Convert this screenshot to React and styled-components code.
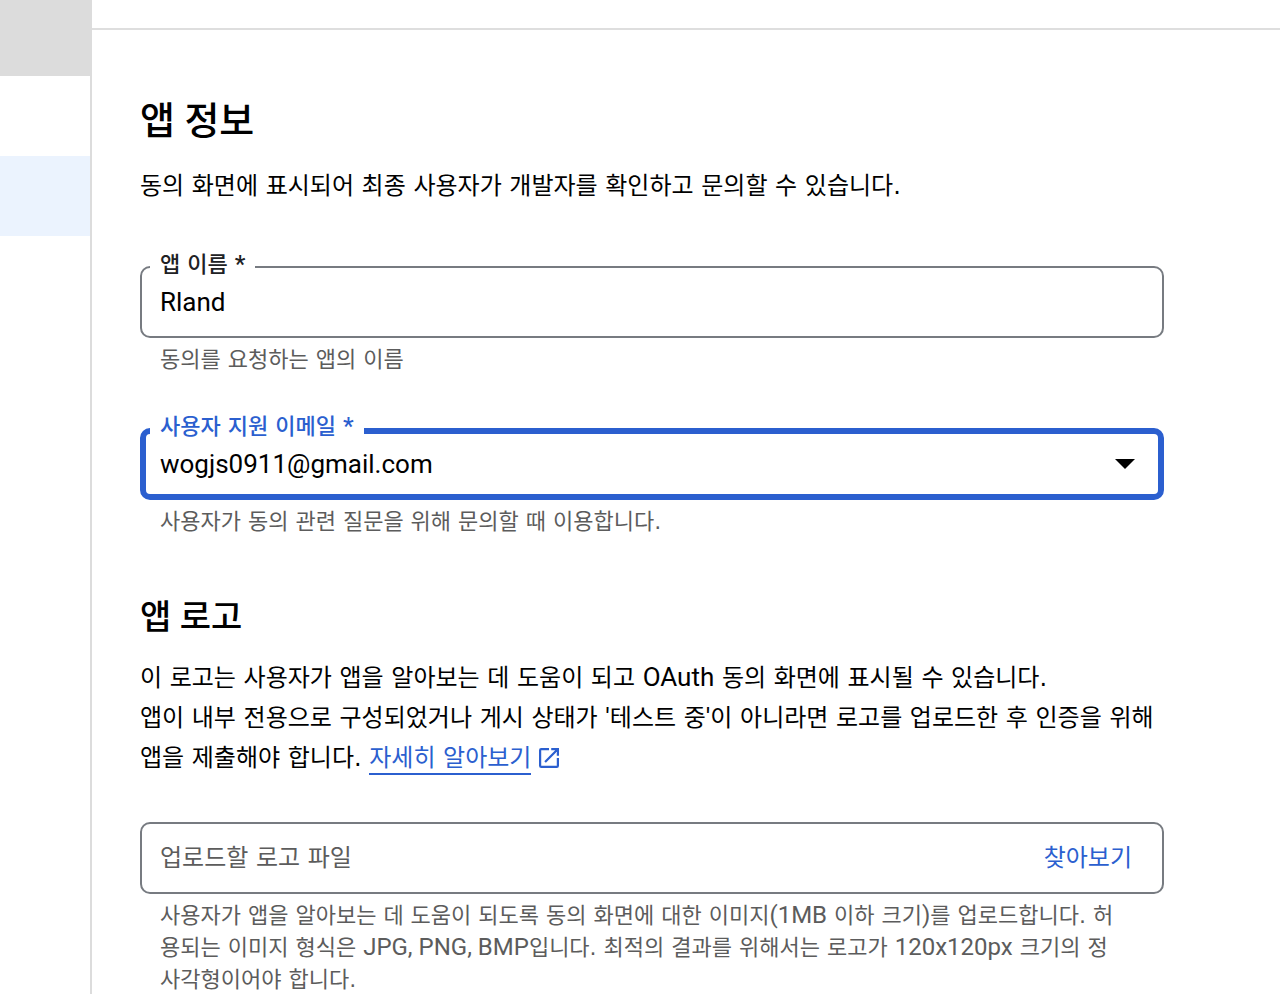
import React from "react";
import styled, { createGlobalStyle } from "styled-components";

const GlobalStyle = createGlobalStyle`
  * { box-sizing: border-box; }
  html, body, #root { margin: 0; min-height: 100vh; }
  #root { height: 100vh; overflow: hidden; }
  body {
    background: #fff;
    color: #000;
    font-family: "DejaVu Sans", "Noto Sans CJK KR", sans-serif;
    font-size: 24px;
    line-height: 40px;
  }
`;

const Shell = styled.div`
  display: flex;
  min-height: 100vh;
`;

const Sidebar = styled.nav`
  flex: 0 0 92px;
  border-right: 2px solid #dcdcdc;
`;

const ProjectBlock = styled.div`
  height: 76px;
  background: #dcdcdc;
`;

const NavItem = styled.a`
  display: block;
  height: 80px;
  background: ${(p) => (p.$active ? "#ebf3fe" : "transparent")};
`;

const Main = styled.main`
  flex: 1;
  min-width: 0;
`;

const TopBar = styled.header`
  height: 30px;
  border-bottom: 2px solid #dedede;
`;

const Form = styled.form`
  margin: 0 116px 0 48px;
  padding-top: 67px;
`;

const Title = styled.h1`
  margin: 0;
  font-family: Roboto, "Noto Sans CJK KR", sans-serif;
  font-size: 38px;
  line-height: 48px;
  font-weight: 500;
`;

const Subtitle = styled(Title).attrs({ as: "h2" })`
  margin-top: 55px;
  font-size: 34px;
`;

const Text = styled.p`
  margin: ${(p) => p.$top}px 0 0;
  word-break: keep-all;
`;

const Latin = styled.span`
  font-family: Roboto, sans-serif;
  font-size: ${(p) => p.$size}px;
  line-height: 1;
`;

const Field = styled.div`
  position: relative;
  margin-top: ${(p) => p.$top}px;
`;

const Label = styled.label`
  position: absolute;
  top: -17px;
  left: 10px;
  padding: 0 10px;
  background: #fff;
  color: ${(p) => (p.$focused ? "#2b5fcf" : "#202124")};
  font-size: 22px;
  line-height: 32px;
  font-weight: 500;
`;

const Box = styled.div`
  display: flex;
  align-items: center;
  height: 72px;
  border: ${(p) => (p.$focused ? "6px" : "2px")} solid ${(p) => (p.$focused ? "#2b5fcf" : "#777b81")};
  border-radius: 10px;
  padding: 0 ${(p) => (p.$focused ? "14px" : "18px")};
`;

const Input = styled.input`
  flex: 1;
  min-width: 0;
  border: 0;
  padding: 0;
  outline: 0;
  background: transparent;
  color: #000;
  font-family: Roboto, sans-serif;
  font-size: 26px;
  line-height: 40px;
`;

const FileInput = styled(Input)`
  font-family: "DejaVu Sans", "Noto Sans CJK KR", sans-serif;
  font-size: 24px;
  &::placeholder { color: #5c5c5c; opacity: 1; }
`;

const Select = styled.select`
  flex: 1;
  min-width: 0;
  appearance: none;
  border: 0;
  padding: 0;
  outline: 0;
  background: transparent;
  color: #000;
  font-family: Roboto, sans-serif;
  font-size: 26px;
`;

const Arrow = styled.svg`
  width: 20px;
  height: 10px;
  margin-right: 9px;
  pointer-events: none;
`;

const Browse = styled.button`
  border: 0;
  padding: 0 12px;
  background: transparent;
  color: #2b5fcf;
  font: inherit;
`;

const Hint = styled.p`
  margin: 6px 40px 0 20px;
  color: #5c5c5c;
  font-size: 22px;
  line-height: 32px;
`;

const Link = styled.a`
  color: #2b5fcf;
  text-decoration: none;
`;

const LinkText = styled.span`
  display: inline-block;
  line-height: 30px;
  border-bottom: 2px solid #2b5fcf;
`;

const External = styled.svg`
  width: 20px;
  height: 20px;
  margin-left: 8px;
  vertical-align: -2px;
`;

export default function App() {
  return (
    <>
      <GlobalStyle />
      <Shell>
        <Sidebar>
          <ProjectBlock />
          <NavItem href="#" />
          <NavItem href="#" $active />
        </Sidebar>
        <Main>
          <TopBar />
          <Form>
            <Title>앱 정보</Title>
            <Text $top={21}>동의 화면에 표시되어 최종 사용자가 개발자를 확인하고 문의할 수 있습니다.</Text>
            <Field $top={60}>
              <Box><Input id="name" defaultValue="Rland" /></Box>
              <Label htmlFor="name">앱 이름 <Latin $size={24}>*</Latin></Label>
              <Hint>동의를 요청하는 앱의 이름</Hint>
            </Field>
            <Field $top={52}>
              <Box $focused>
                <Select id="email"><option>wogjs0911@gmail.com</option></Select>
                <Arrow viewBox="0 0 20 10"><path d="M0 0h20L10 10z" /></Arrow>
              </Box>
              <Label htmlFor="email" $focused>사용자 지원 이메일 <Latin $size={24}>*</Latin></Label>
              <Hint>사용자가 동의 관련 질문을 위해 문의할 때 이용합니다.</Hint>
            </Field>
            <Subtitle>앱 로고</Subtitle>
            <Text $top={17}>
              이 로고는 사용자가 앱을 알아보는 데 도움이 되고 <Latin $size={26}>OAuth</Latin> 동의 화면에 표시될 수 있습니다.
              <br />
              앱이 내부 전용으로 구성되었거나 게시 상태가 <Latin $size={26}>'</Latin>테스트 중<Latin $size={26}>'</Latin>이 아니라면 로고를 업로드한 후 인증을 위해
              앱을 제출해야 합니다.{" "}
              <Link href="#">
                <LinkText>자세히 알아보기</LinkText>
                <External viewBox="3 3 18 18" fill="currentColor" aria-hidden="true"><path d="M19 19H5V5h7V3H5a2 2 0 0 0-2 2v14a2 2 0 0 0 2 2h14a2 2 0 0 0 2-2v-7h-2v7zM14 3v2h3.590l-9.830 9.830 1.410 1.410L19 6.410V10h2V3h-7z" /></External>
              </Link>
            </Text>
            <Field $top={44}>
              <Box>
                <FileInput aria-label="업로드할 로고 파일" placeholder="업로드할 로고 파일" />
                <Browse type="button">찾아보기</Browse>
              </Box>
              <Hint>
                사용자가 앱을 알아보는 데 도움이 되도록 동의 화면에 대한 이미지<Latin $size={24}>(1MB</Latin> 이하 크기<Latin $size={24}>)</Latin>를 업로드합니다. 허용되는 이미지 형식은 <Latin $size={24}>JPG, PNG, BMP</Latin>입니다. 최적의 결과를 위해서는 로고가 <Latin $size={24}>120x120px</Latin> 크기의 정사각형이어야 합니다.
              </Hint>
            </Field>
          </Form>
        </Main>
      </Shell>
    </>
  );
}
